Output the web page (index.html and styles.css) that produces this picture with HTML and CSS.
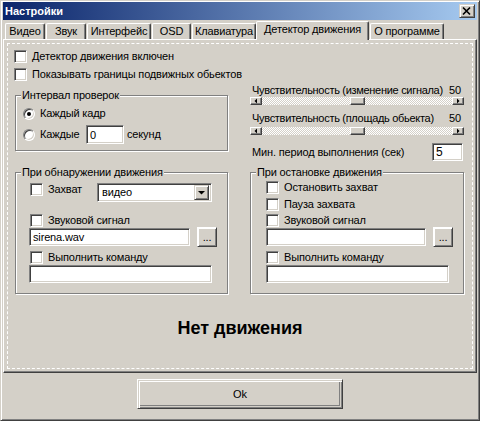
FILE: index.html
```html
<!DOCTYPE html>
<html lang="ru">
<head>
<meta charset="utf-8">
<title>Настройки</title>
<link rel="stylesheet" href="styles.css">
</head>
<body>
<div class="window">
  <div class="titlebar">
    <span class="title">Настройки</span>
    <span class="close raised"><svg width="14" height="12" viewBox="0 0 14 12"><path d="M3 2.5 L10 9.5 M10 2.5 L3 9.5" stroke="#000" stroke-width="1.7" fill="none"/></svg></span>
  </div>
  <div class="tabs">
    <div class="tab w-video">Видео</div>
    <div class="tab w-sound">Звук</div>
    <div class="tab w-iface">Интерфейс</div>
    <div class="tab w-osd">OSD</div>
    <div class="tab w-kbd">Клавиатура</div>
    <div class="tab active w-motion">Детектор движения</div>
    <div class="tab w-about">О программе</div>
  </div>
  <div class="page">
    <div class="panel">
      <div class="check-row first"><span class="cb"></span><span>Детектор движения включен</span></div>
      <div class="check-row second"><span class="cb"></span><span>Показывать границы подвижных обьектов</span></div>

      <div class="cols mid">
        <div class="group interval">
          <div class="group-title">Интервал проверок</div>
          <div class="radio-row r1"><span class="rb checked"></span><span>Каждый кадр</span></div>
          <div class="radio-row r2"><span class="rb"></span><span class="every">Каждые</span><span class="field sec">0</span><span class="sec-label">секунд</span></div>
        </div>
        <div class="sliders">
          <div class="slider-label"><span class="sl-text">Чувствительность (изменение сигнала)</span><span>50</span></div>
          <div class="scroll">
            <span class="sbtn raised"><svg width="10" height="6" viewBox="0 0 10 6"><polygon points="3.5,3 6,0.5 6,5.5" fill="#000"/></svg></span>
            <span class="track"></span>
            <span class="thumb raised"></span>
            <span class="track"></span>
            <span class="sbtn raised"><svg width="10" height="6" viewBox="0 0 10 6"><polygon points="6.5,3 4,0.5 4,5.5" fill="#000"/></svg></span>
          </div>
          <div class="slider-label l2"><span class="sl-text">Чувствительность (площадь обьекта)</span><span>50</span></div>
          <div class="scroll s2">
            <span class="sbtn raised"><svg width="10" height="6" viewBox="0 0 10 6"><polygon points="3.5,3 6,0.5 6,5.5" fill="#000"/></svg></span>
            <span class="track"></span>
            <span class="thumb raised"></span>
            <span class="track"></span>
            <span class="sbtn raised"><svg width="10" height="6" viewBox="0 0 10 6"><polygon points="6.5,3 4,0.5 4,5.5" fill="#000"/></svg></span>
          </div>
          <div class="min-row"><span>Мин. период выполнения (сек)</span><span class="field min">5</span></div>
        </div>
      </div>

      <div class="cols lower">
        <div class="group detect">
          <div class="group-title">При обнаружении движения</div>
          <div class="row capture"><span class="cb"></span><span class="cap-label">Захват</span>
            <span class="combo field"><span class="combo-text">видео</span><span class="combo-btn raised"><svg width="11" height="11" viewBox="0 0 11 11"><polygon points="2,4 9,4 5.5,7.5" fill="#000"/></svg></span></span>
          </div>
          <div class="row cbrow sound"><span class="cb"></span><span>Звуковой сигнал</span></div>
          <div class="row filerow"><span class="field file">sirena.wav</span><span class="dots raised">...</span></div>
          <div class="row cbrow cmd"><span class="cb"></span><span>Выполнить команду</span></div>
          <div class="field cmdfield"></div>
        </div>
        <div class="group stop">
          <div class="group-title">При остановке движения</div>
          <div class="row cbrow s1"><span class="cb"></span><span>Остановить захват</span></div>
          <div class="row cbrow s2r"><span class="cb"></span><span>Пауза захвата</span></div>
          <div class="row cbrow s3"><span class="cb"></span><span>Звуковой сигнал</span></div>
          <div class="row filerow"><span class="field file2"></span><span class="dots raised">...</span></div>
          <div class="row cbrow cmd"><span class="cb"></span><span>Выполнить команду</span></div>
          <div class="field cmdfield"></div>
        </div>
      </div>

      <div class="status">Нет движения</div>
    </div>
  </div>
  <div class="footer">
    <div class="ok">Ok</div>
  </div>
</div>
</body>
</html>
```
FILE: styles.css
```css
* { box-sizing: border-box; }
html, body { margin: 0; padding: 0; }
body {
  width: 480px; height: 421px; overflow: hidden;
  background: #d4d0c8;
  font-family: "Liberation Sans", Arial, sans-serif;
  font-size: 11px; color: #000;
  letter-spacing: -0.15px;
  white-space: nowrap;
}
.window {
  width: 480px; height: 421px;
  border: 1px solid; border-color: #d4d0c8 #404040 #404040 #d4d0c8;
  box-shadow: inset 1px 1px #fff, inset -1px -1px #808080;
  padding: 1px 2px 2px 2px;
  display: flex; flex-direction: column;
  background: #d4d0c8;
}
.raised {
  background: #d4d0c8;
  border: 1px solid; border-color: #d4d0c8 #404040 #404040 #d4d0c8;
  box-shadow: inset 1px 1px #fff, inset -1px -1px #808080;
}
.field {
  background: #fff;
  border: 1px solid; border-color: #808080 #fff #fff #808080;
  box-shadow: inset 1px 1px #404040, inset -1px -1px #d4d0c8;
}
.titlebar {
  height: 18px; flex: none;
  display: flex; align-items: center; justify-content: space-between;
  background: linear-gradient(to right, #0a246a, #a6caf0);
  padding-left: 2px;
}
.title { color: #fff; font-weight: bold; font-size: 11px; line-height: 18px; letter-spacing: 0; }
.close { width: 16px; height: 14px; margin-right: 2px; display: flex; align-items: center; justify-content: center; }
.close svg { display: block; }

.tabs { height: 19px; flex: none; display: flex; align-items: flex-end; padding-left: 2px; }
.tab {
  height: 16px; margin-right: 1px;
  border: 1px solid; border-bottom: none;
  border-color: #fff #404040 transparent #fff;
  box-shadow: inset -1px 0 #808080;
  border-radius: 2px 2px 0 0;
  display: flex; align-items: center; justify-content: center;
  line-height: 13px;
}
.tab.active {
  height: 19px; margin-bottom: -1px; margin-left: -1px;
  position: relative; z-index: 1; background: #d4d0c8;
  padding-bottom: 3px;
}
.w-video { width: 40px; }
.w-sound { width: 40px; }
.w-iface { width: 64px; }
.w-osd { width: 39px; }
.w-kbd { width: 64px; }
.w-motion { width: 113px; }
.w-about { width: 74px; }

.page {
  height: 334px; flex: none;
  border: 1px solid; border-color: #fff #404040 #404040 #fff;
  box-shadow: inset -1px -1px #808080;
  padding: 3px;
  display: flex;
}
.panel { flex: 1; border: 1px dashed #fff; display: flex; flex-direction: column; }

.cb {
  width: 13px; height: 13px; flex: none;
  background: #fff;
  border: 1px solid; border-color: #808080 #fff #fff #808080;
  box-shadow: inset 1px 1px #404040, inset -1px -1px #d4d0c8;
}
.rb {
  width: 12px; height: 12px; flex: none; border-radius: 50%;
  background: #fff;
  border: 1px solid; border-color: #808080 #fff #fff #808080;
  box-shadow: inset 1px 1px #404040, inset -1px -1px #d4d0c8;
  display: flex; align-items: center; justify-content: center;
}
.rb.checked::before { content: ""; width: 4px; height: 4px; border-radius: 50%; background: #000; }

.check-row { display: flex; align-items: center; gap: 5px; height: 13px; line-height: 13px; margin-left: 6px; }
.check-row.first { margin-top: 6px; }
.check-row.second { margin-top: 5px; }

.cols { display: grid; grid-template-columns: 213px 214px; column-gap: 22px; margin-left: 7px; }
.mid { margin-top: 3px; align-items: start; }
.lower { margin-top: 11px; }

.group {
  border: 1px solid #808080;
  box-shadow: inset 1px 1px #fff, 1px 1px #fff;
  display: flex; flex-direction: column;
}
.group-title {
  width: fit-content; height: 13px; line-height: 13px;
  margin-top: -7px; padding: 0 1px;
  background: #d4d0c8;
}
.interval { margin-top: 11px; padding: 0 0 6px 7px; }
.interval .group-title { margin-left: -2px; }
.detect .group-title { margin-left: -9px; }
.stop .group-title { margin-left: -10px; }
.radio-row { display: flex; align-items: center; gap: 5px; line-height: 13px; }
.r1 { height: 13px; margin-top: 5px; }
.r2 { height: 19px; margin-top: 5px; }
.every { width: 41px; }
.sec { width: 38px; height: 19px; padding: 2px 3px; line-height: 14px; }
.sec-label { margin-left: -2px; }

.sliders { display: flex; flex-direction: column; }
.slider-label { display: flex; justify-content: space-between; line-height: 13px; height: 13px; padding: 0 3px 0 2px; }
.sl-text { letter-spacing: -0.3px; }
.slider-label.l2 { margin-top: 7px; }
.scroll { height: 8px; display: flex; }
.scroll.s2 { margin-top: 2px; }
.track { flex: 1; background: repeating-conic-gradient(#fff 0 25%, #d4d0c8 0 50%) 0 0 / 2px 2px; }
.sbtn { width: 12px; height: 8px; flex: none; display: flex; align-items: center; justify-content: center; box-shadow: inset -1px -1px #808080; border-color: #fff #404040 #404040 #fff; }
.sbtn svg { display: block; }
.thumb { width: 15px; height: 8px; flex: none; box-shadow: inset -1px -1px #808080; border-color: #fff #404040 #404040 #fff; }
.min-row { margin-top: 8px; display: flex; justify-content: space-between; align-items: center; padding: 0 1px 0 2px; line-height: 13px; }
.min { width: 31px; height: 18px; padding: 2px 3px; line-height: 13px; font-size: 12px; }

.row { display: flex; line-height: 13px; }
.cbrow { height: 13px; align-items: center; gap: 5px; }
.detect { padding: 0 0 10px 14px; }
.stop { padding: 0 0 10px 15px; }
.capture { margin-top: 4px; height: 19px; align-items: flex-start; }
.cap-label { width: 49px; margin-left: 5px; }
.combo { width: 115px; height: 19px; display: flex; align-items: center; justify-content: space-between; padding: 2px; }
.combo-text { padding-left: 2px; line-height: 13px; }
.combo-btn { width: 15px; height: 15px; display: flex; align-items: center; justify-content: center; }
.combo-btn svg { display: block; }
.sound { margin-top: 12px; }
.filerow { height: 20px; align-items: center; }
.file { width: 161px; height: 18px; margin-left: -1px; padding: 2px 3px; line-height: 13px; }
.file2 { width: 160px; height: 18px; }
.dots { width: 20px; height: 20px; margin-left: 7px; display: flex; align-items: flex-end; justify-content: center; padding-bottom: 3px; line-height: 11px; border-color: #fff #404040 #404040 #fff; }
.cmd { margin-top: 4px; }
.cmdfield { width: 183px; height: 18px; margin-top: 1px; }
.detect .cmdfield { margin-left: -1px; }
.s1 { margin-top: 2px; }
.s2r { margin-top: 4px; }
.s3 { margin-top: 3px; }

.status { margin-top: 24px; line-height: 20px; text-align: center; font-weight: bold; font-size: 18px; letter-spacing: 0; }

.footer { flex: 1; display: flex; justify-content: center; padding-top: 6px; }
.ok {
  width: 206px; height: 30px;
  border: 1px solid; border-color: #fff #404040 #404040 #fff;
  box-shadow: inset 1px 1px #d4d0c8, inset 2px 2px #fff, inset -1px -1px #808080, inset -2px -2px #d4d0c8, inset -3px -3px #808080;
  display: flex; align-items: center; justify-content: center;
  line-height: 13px;
}
```
